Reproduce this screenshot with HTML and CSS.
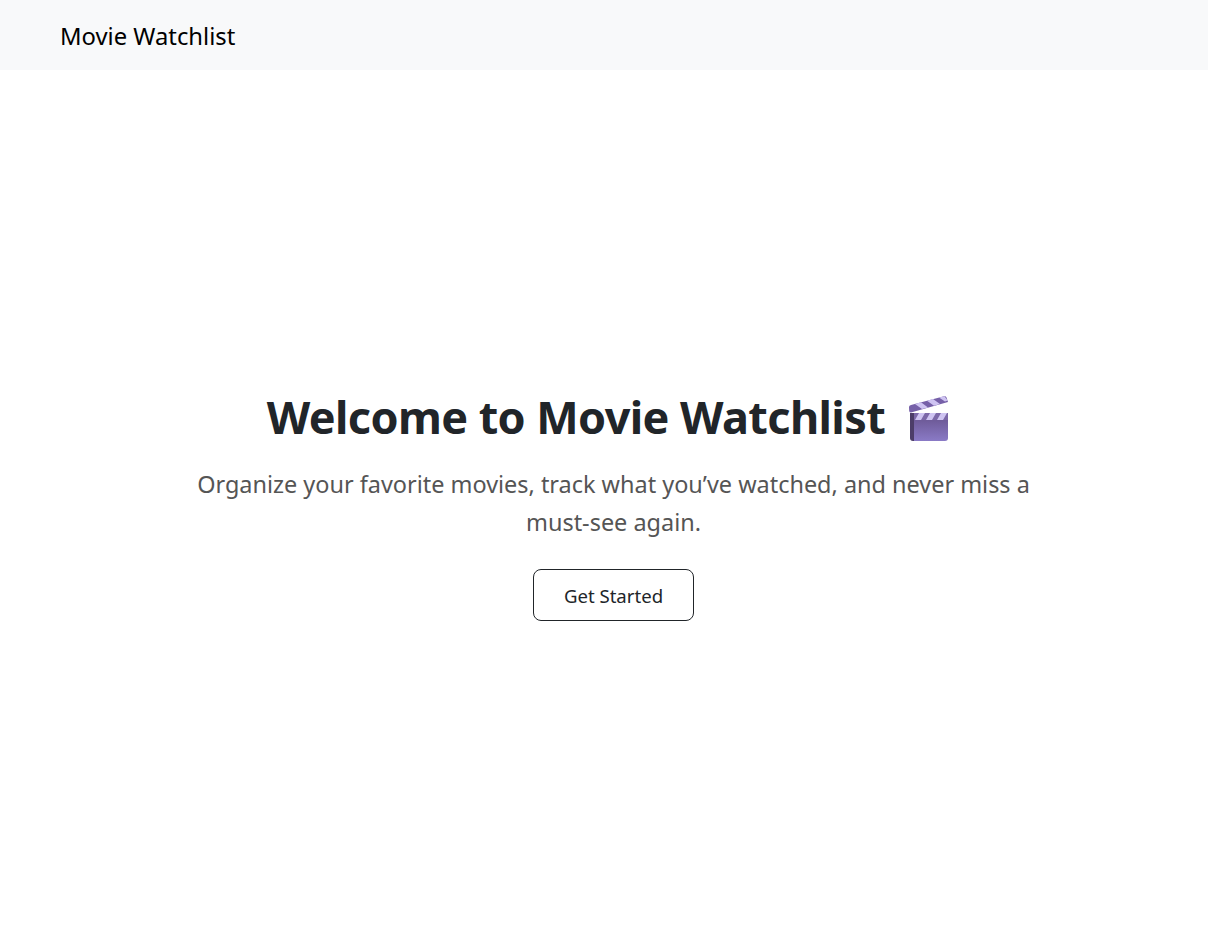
FILE: index.html
```html
<!DOCTYPE html>
<html lang="en">
<head>
    <meta charset="UTF-8">
    <title>Movie Watchlist</title>
    <link rel="stylesheet" href="styles.css">
</head>
<body>
    <nav class="navbar">
        <a href="#" class="navbar-brand">Movie Watchlist</a>
    </nav>

    <main class="hero">
        <h1 class="hero-title">
            Welcome to Movie Watchlist
            <svg class="clapper" viewBox="0 0 42 46" aria-hidden="true">
                <defs>
                    <linearGradient id="clapperBody" x1="0" y1="0" x2="0" y2="1">
                        <stop offset="0" stop-color="#65508a"/>
                        <stop offset="1" stop-color="#8a7ac6"/>
                    </linearGradient>
                </defs>
                <!-- arm -->
                <path d="M3 9 L36 0.3 Q38 0 38.5 1.5 L40 6 L3 16.5 Q1.5 16.5 1.2 15 L1 11 Q1 9.5 3 9 Z" fill="#7660a8"/>
                <path d="M7 7.9 L13 6.3 L20 11.4 L14 13.1 Z M19 4.7 L25 3.1 L32 8 L26 9.7 Z M31 1.6 L36.5 0.2 L39.6 4.6 L37 5.6 Z" fill="#cfc4f2"/>
                <!-- board -->
                <path d="M5 17 H40 V42 Q40 45 37 45 H5 Z" fill="url(#clapperBody)"/>
                <path d="M6 17 H2 V42 Q2 45 5 45 H6 Z" fill="#4c3d68"/>
                <path d="M6 17 H40 V24 H6 Z" fill="#7c68a8"/>
                <path d="M11 17 H17 L13 24 H7 Z M22 17 H28 L24 24 H18 Z M33 17 H39 L35 24 H29 Z" fill="#cfc4f2"/>
            </svg>
        </h1>
        <p class="hero-text">Organize your favorite movies, track what you’ve watched, and never miss a must-see again.</p>
        <a href="#" class="btn-start">Get Started</a>
    </main>
</body>
</html>
```

FILE: styles.css
```css
body {
    font-family: 'Noto Sans', 'Open Sans', sans-serif;
    margin: 0;
    padding: 0;
    background: #ffffff;
    color: #212529;
    min-height: 100vh;
}

.navbar {
    background: #f8f9fa;
    height: 70px;
    display: flex;
    align-items: center;
    padding: 0 60px;
}

.navbar-brand {
    font-size: 23.8px;
    line-height: 34px;
    padding-top: 2px;
    color: #000000;
    text-decoration: none;
}

.hero {
    height: 869px;
    padding-left: 19px;
    box-sizing: border-box;
    display: flex;
    flex-direction: column;
    align-items: center;
    justify-content: center;
    text-align: center;
}

.hero-title {
    margin: 0 0 20px;
    font-size: 45px;
    font-weight: 700;
    letter-spacing: -0.6px;
    line-height: 58px;
}

.clapper {
    width: 42px;
    height: 46px;
    margin: 0 10px 0 12px;
    vertical-align: -8px;
}

.hero-text {
    width: 880px;
    margin: 0 0 28px;
    font-size: 23.45px;
    line-height: 37.5px;
    color: #555555;
}

.btn-start {
    display: block;
    width: 159px;
    height: 50px;
    line-height: 51px;
    border: 1px solid #212529;
    border-radius: 8px;
    font-size: 18.6px;
    color: #212529;
    text-decoration: none;
}
```
